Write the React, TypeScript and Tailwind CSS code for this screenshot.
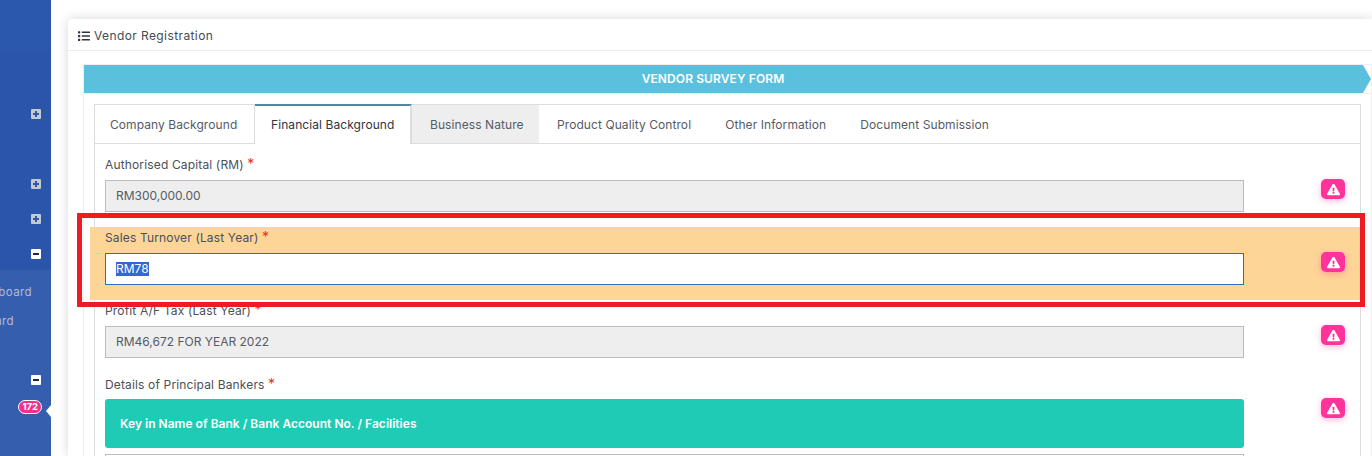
import { FaList, FaExclamationTriangle } from 'react-icons/fa';

function SideToggle({ open, className }: { open?: boolean; className: string }) {
    return (
        <div className={`flex justify-end pr-[10px] ${className}`}>
            <div className={`flex h-[10px] w-[10px] items-center justify-center rounded-[1px] ${open ? 'bg-white' : 'bg-[#c4c9d2]'}`}>
                <div className={`relative h-[2px] w-[6px] ${open ? 'bg-[#1d2a44]' : 'bg-[#2f5aa9]'}`}>
                    {!open && <div className="absolute left-[2px] top-[-2px] h-[6px] w-[2px] bg-[#2f5aa9]" />}
                </div>
            </div>
        </div>
    );
}

function Sidebar() {
    return (
        <aside className="flex h-full w-[51px] shrink-0 flex-col bg-[#2a55a8] font-['Inter',sans-serif]">
            <div className="h-[51px] shrink-0 bg-[#2b58ad]" />
            <SideToggle className="mt-[58px]" />
            <SideToggle className="mt-[60px]" />
            <SideToggle className="mt-[25px]" />
            <SideToggle open className="mt-[25px]" />
            <div className="mt-[11px] flex h-[196px] flex-col bg-[#355fae]">
                <div className="mt-[15px] flex justify-end whitespace-nowrap pr-[19px] text-[11.5px] leading-[14px] tracking-[0.4px] text-[#b4bccf]">
                    board
                </div>
                <div className="mt-[15px] flex justify-end whitespace-nowrap pr-[37px] text-[11.5px] leading-[14px] tracking-[0.4px] text-[#b4bccf]">
                    ard
                </div>
                <SideToggle open className="mt-[47px]" />
                <div className="relative mt-[15px] flex h-[14px] justify-end pr-[9px]">
                    <span className="rounded-full border border-white bg-[#f0308f] px-[3px] text-[9.5px] font-bold leading-[12px] text-white">
                        172
                    </span>
                    <div className="absolute right-0 top-[5px] h-0 w-0 border-y-[6px] border-r-[5px] border-y-transparent border-r-white" />
                </div>
            </div>
        </aside>
    );
}

function Tab({ label, state, className = '' }: { label: string; state?: 'first' | 'active' | 'muted'; className?: string }) {
    const base = `flex shrink-0 items-center whitespace-nowrap text-[12px] tracking-[0.08px] ${className}`;
    if (state === 'first') {
        return <div className={`${base} h-[38px] w-[160px] border-r border-[#dddddd] pt-[2px] pl-[15px] text-[#555b66]`}>{label}</div>;
    }
    if (state === 'active') {
        return <div className={`${base} -mt-px h-[40px] w-[157px] border-t-2 border-r-2 border-[#50899c] border-r-[#dddddd] bg-white pl-[16px] text-[#2f3542]`}>{label}</div>;
    }
    if (state === 'muted') {
        return <div className={`${base} h-[38px] w-[127px] bg-[#eeeeee] pt-[2px] pl-[18px] text-[#555b66]`}>{label}</div>;
    }
    return <div className={`${base} h-[38px] px-[17px] pt-[2px] text-[#555b66]`}>{label}</div>;
}

function WarnButton() {
    return (
        <button className="flex h-[20px] w-[24px] items-center justify-center rounded-[5px] bg-[#ff3399] text-white shadow-[0_2px_6px_rgba(255,51,153,0.35)]">
            <FaExclamationTriangle className="h-[13px] w-[13px]" />
        </button>
    );
}

function FieldLabel({ text }: { text: string }) {
    return (
        <label className="block text-[12px] leading-[15px] tracking-[0.15px] text-[#4a4f5a]">
            {text} <span className="text-[14px] leading-[12px] text-[#e8301c]">*</span>
        </label>
    );
}

function ReadOnlyField({ value }: { value: string }) {
    return (
        <div className="mt-[8px] flex h-[32px] w-[1139px] items-center border border-[#bcbcbc] bg-[#eeeeee] px-[10px] text-[12px] text-[#555b66]">
            {value}
        </div>
    );
}

export default function App() {
    return (
        <div className="relative flex h-[456px] w-[1372px] overflow-hidden bg-white font-['Inter',sans-serif]">
            <Sidebar />

            <main className="ml-[17px] mt-[19px] flex-1 rounded-tl-[4px] bg-white shadow-[0_0_12px_rgba(0,0,0,0.16)]">
                <div className="flex h-[32px] items-center gap-[4px] border-b border-[#ebebeb] pl-[10px] pt-[2px] text-[12px] tracking-[0.4px] text-[#444a55]">
                    <FaList className="h-[12px] w-[12px] text-[#2f3542]" />
                    Vendor Registration
                </div>

                <div className="ml-[15px] mt-[13px] border-x border-t border-[#eeeeee]">
                    <div className="flex h-[29px] items-start border-b border-[#eeeeee]">
                        <div className="flex h-[28px] w-[1279px] items-center justify-center bg-[#5bc0de] pr-[21px] text-[12px] font-semibold tracking-[0.1px] text-white">
                            VENDOR SURVEY FORM
                        </div>
                        <div className="h-0 w-0 border-y-[14px] border-l-[8px] border-y-transparent border-l-[#5bc0de]" />
                    </div>

                    <div className="ml-[10px] mt-[10px] w-[1267px] border-x border-t border-[#dddddd]">
                        <div className="flex h-[39px] border-b border-[#dddddd]">
                            <Tab label="Company Background" state="first" />
                            <Tab label="Financial Background" state="active" />
                            <Tab label="Business Nature" state="muted" />
                            <Tab label="Product Quality Control" className="ml-px" />
                            <Tab label="Other Information" />
                            <Tab label="Document Submission" />
                        </div>

                        <div className="flex pl-[10px] pt-[13px]">
                            <div>
                                <FieldLabel text="Authorised Capital (RM)" />
                                <ReadOnlyField value="RM300,000.00" />
                            </div>
                            <div className="ml-[77px] mt-[22px]"><WarnButton /></div>
                        </div>

                        <div className="-ml-[5px] -mr-[4px] mt-[15px] flex h-[73px] bg-[#fdd597] pl-[15px] pt-[3px]">
                            <div>
                                <FieldLabel text="Sales Turnover (Last Year)" />
                                <div className="mt-[8px] flex h-[32px] w-[1139px] items-center border border-[#2f6fad] bg-white px-[10px] text-[12px] text-white">
                                    <span className="bg-[#3367d1] leading-[14px]">RM78</span>
                                </div>
                            </div>
                            <div className="ml-[77px] mt-[22px]"><WarnButton /></div>
                        </div>

                        <div className="mt-[3px] flex pl-[10px]">
                            <div>
                                <FieldLabel text="Profit A/F Tax (Last Year)" />
                                <ReadOnlyField value="RM46,672 FOR YEAR 2022" />
                            </div>
                            <div className="ml-[77px] mt-[22px]"><WarnButton /></div>
                        </div>

                        <div className="mt-[19px] flex pl-[10px]">
                            <div>
                                <FieldLabel text="Details of Principal Bankers" />
                                <div className="mt-[7px] flex h-[49px] w-[1139px] items-center rounded-[3px] bg-[#1fcbb5] px-[15px] text-[12px] font-semibold tracking-[0.02px] text-white">
                                    Key in Name of Bank / Bank Account No. / Facilities
                                </div>
                                <div className="mt-[6px] h-[12px] w-[1139px] border border-[#bcbcbc]" />
                            </div>
                            <div className="ml-[77px] mt-[21px]"><WarnButton /></div>
                        </div>
                    </div>
                </div>
            </main>

            <div className="pointer-events-none absolute left-[77px] top-[213px] h-[94px] w-[1288px] border-[5px] border-[#ed1c24]" />
        </div>
    );
}
